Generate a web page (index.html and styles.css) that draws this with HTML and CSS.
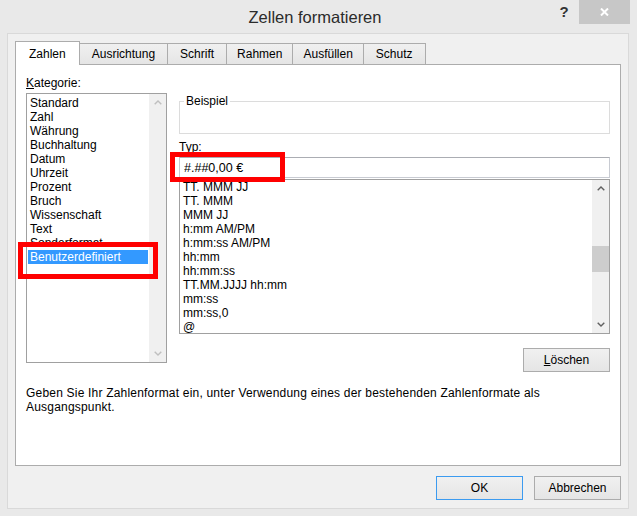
FILE: index.html
```html
<!DOCTYPE html>
<html lang="de">
<head>
  <meta charset="UTF-8" />
  <title>Zellen formatieren</title>
  <link rel="stylesheet" href="styles.css">
</head>
<body>
  <div class="window">
    <div class="titlebar">
      <div class="title">Zellen formatieren</div>
      <div class="controls">
        <span class="help">?</span>
        <span class="close">
          <svg width="9" height="8" viewBox="0 0 9 8"><path d="M1 0.5 L8 7.5 M8 0.5 L1 7.5" stroke="#fff" stroke-width="2" fill="none"/></svg>
        </span>
      </div>
    </div>

    <div class="dialog">
      <div class="tabs">
        <div class="tab active">Zahlen</div>
        <div class="tab">Ausrichtung</div>
        <div class="tab">Schrift</div>
        <div class="tab tab-narrow">Rahmen</div>
        <div class="tab tab-narrow">Ausfüllen</div>
        <div class="tab">Schutz</div>
      </div>

      <div class="panel">
        <div class="columns">
          <div class="left">
            <div class="label"><u>K</u>ategorie:</div>
            <div class="listbox cat-list">
              <ul class="items">
                <li>Standard</li>
                <li>Zahl</li>
                <li>Währung</li>
                <li>Buchhaltung</li>
                <li>Datum</li>
                <li>Uhrzeit</li>
                <li>Prozent</li>
                <li>Bruch</li>
                <li>Wissenschaft</li>
                <li>Text</li>
                <li>Sonderformat</li>
                <li class="selected">Benutzerdefiniert</li>
              </ul>
              <div class="scrollbar disabled">
                <div class="arrow"><svg width="8" height="5" viewBox="0 0 8 5"><path d="M0.7 4.3 L4 1 L7.3 4.3" /></svg></div>
                <div class="track"></div>
                <div class="arrow"><svg width="8" height="5" viewBox="0 0 8 5"><path d="M0.7 0.7 L4 4 L7.3 0.7" /></svg></div>
              </div>
            </div>
          </div>

          <div class="right">
            <fieldset class="sample">
              <legend>Beispiel</legend>
            </fieldset>
            <div class="label typ-label">Typ:</div>
            <input class="typ-input" type="text" value="#.##0,00 €" />
            <div class="listbox format-list">
              <ul class="items">
                <li>TT. MMM JJ</li>
                <li>TT. MMM</li>
                <li>MMM JJ</li>
                <li>h:mm AM/PM</li>
                <li>h:mm:ss AM/PM</li>
                <li>hh:mm</li>
                <li>hh:mm:ss</li>
                <li>TT.MM.JJJJ hh:mm</li>
                <li>mm:ss</li>
                <li>mm:ss,0</li>
                <li>@</li>
              </ul>
              <div class="scrollbar">
                <div class="arrow"><svg width="8" height="5" viewBox="0 0 8 5"><path d="M0.7 4.3 L4 1 L7.3 4.3" /></svg></div>
                <div class="track"><div class="thumb"></div></div>
                <div class="arrow"><svg width="8" height="5" viewBox="0 0 8 5"><path d="M0.7 0.7 L4 4 L7.3 0.7" /></svg></div>
              </div>
            </div>
            <div class="actions">
              <button class="btn"><u>L</u>öschen</button>
            </div>
          </div>
        </div>

        <p class="hint">Geben Sie Ihr Zahlenformat ein, unter Verwendung eines der bestehenden Zahlenformate als<br>Ausgangspunkt.</p>

        <!-- Markierungen -->
        <div class="mark mark-cat"></div>
        <div class="mark mark-typ"></div>
      </div>

      <div class="footer">
        <button class="btn btn-default">OK</button>
        <button class="btn">Abbrechen</button>
      </div>
    </div>
  </div>
</body>
</html>
```

FILE: styles.css
```css
* {
  box-sizing: border-box;
}

body {
  margin: 0;
  font-family: "Liberation Sans", Arial, sans-serif;
  font-size: 12px;
  color: #000;
}

.window {
  width: 637px;
  height: 516px;
  background: #e9e9e9;
  display: flex;
  flex-direction: column;
}

.titlebar {
  height: 33px;
  flex: none;
  display: grid;
  grid-template-columns: 1fr auto 1fr;
  align-items: start;
  padding-right: 7px;
}

.title {
  grid-column: 2;
  font-size: 16.5px;
  line-height: 20px;
  margin-top: 7px;
  color: #2b2b2b;
}

.controls {
  grid-column: 3;
  justify-self: end;
  display: flex;
}

.help {
  width: 30px;
  height: 24px;
  line-height: 23px;
  text-align: center;
  font-size: 15px;
  font-weight: bold;
  color: #333;
}

.close {
  width: 51px;
  height: 24px;
  background: #c7c7c7;
  display: flex;
  align-items: center;
  justify-content: center;
}

.dialog {
  flex: 1;
  margin: 0 8px 7px 7px;
  background: #f0f0f0;
  border: 1px solid #d9d9d9;
  padding: 7px 7px 0 7px;
  display: flex;
  flex-direction: column;
}

.tabs {
  display: flex;
  align-items: flex-end;
  height: 24px;
  margin-bottom: -1px;
  position: relative;
  z-index: 1;
}

.tab {
  height: 22px;
  line-height: 20px;
  padding: 0 12px;
  border: 1px solid #acacac;
  background: linear-gradient(#f0f0f0, #e5e5e5);
  margin-left: -1px;
}

.tab:first-child {
  margin-left: 0;
}

.tab.active {
  height: 24px;
  line-height: 24px;
  padding: 0 13px;
  background: #fff;
  border-bottom: none;
}

.tab-narrow {
  padding: 0 10px;
}

.panel {
  height: 402px;
  flex: none;
  background: #fff;
  border: 1px solid #acacac;
  padding: 11px 9px 0 10px;
  position: relative;
}

.columns {
  display: flex;
  align-items: flex-start;
}

.label {
  line-height: 14px;
  margin-bottom: 3px;
}

.left {
  width: 141px;
}

.right {
  width: 431px;
  margin-left: 12px;
}

.listbox {
  display: flex;
  border: 1px solid #a0a0a0;
  background: #fff;
  overflow: hidden;
}

.items {
  list-style: none;
  margin: 0;
  padding: 0;
  flex: 1;
  line-height: 14px;
  white-space: nowrap;
  overflow: hidden;
}

.cat-list {
  height: 270px;
}

.cat-list .items {
  padding: 2px 1px 0 1px;
}

.cat-list li {
  padding-left: 2px;
}

.cat-list li.selected {
  background: #3399ff;
  color: #fff;
}

.scrollbar {
  width: 17px;
  flex: none;
  background: #f0f0f0;
  display: flex;
  flex-direction: column;
}

.arrow {
  height: 17px;
  display: flex;
  align-items: center;
  justify-content: center;
}

.arrow path {
  fill: none;
  stroke: #606060;
  stroke-width: 1.4;
}

.scrollbar.disabled .arrow path {
  stroke: #bfbfbf;
}

.track {
  flex: 1;
}

.thumb {
  margin-top: 49px;
  height: 26px;
  background: #cdcdcd;
}

.sample {
  margin: 18px 0 0 0;
  padding: 0 0 0 4px;
  height: 40px;
  border: 1px solid #dcdcdc;
}

.sample legend {
  padding: 0 2px;
  line-height: 14px;
}

.typ-label {
  margin-top: 6px;
}

.typ-input {
  display: block;
  width: 100%;
  height: 21px;
  margin: 0;
  padding: 0 4px;
  font-family: inherit;
  font-size: 12.5px;
  color: #000;
  border: 1px solid #c8cbd2;
  border-top-color: #abadb3;
  outline: none;
}

.format-list {
  height: 155px;
  margin-top: 1px;
}

.format-list .items {
  padding-left: 3px;
}

.actions {
  display: flex;
  justify-content: flex-end;
  margin-top: 14px;
}

.btn {
  width: 87px;
  height: 24px;
  padding: 0;
  font-family: inherit;
  font-size: 12px;
  color: #000;
  border: 1px solid #acacac;
  background: linear-gradient(#f0f0f0, #e5e5e5);
}

.btn-default {
  border-color: #3c9bf0;
}

.hint {
  margin: 14px 0 0 0;
  line-height: 14px;
  letter-spacing: 0.2px;
}

.mark {
  position: absolute;
  border: 5px solid #ff0000;
}

.mark-cat {
  left: 2px;
  top: 177px;
  width: 140px;
  height: 37px;
}

.mark-typ {
  left: 154px;
  top: 87px;
  width: 115px;
  height: 30px;
}

.footer {
  flex: 1;
  display: flex;
  justify-content: flex-end;
  align-items: flex-start;
  gap: 11px;
  padding-top: 10px;
}
```
